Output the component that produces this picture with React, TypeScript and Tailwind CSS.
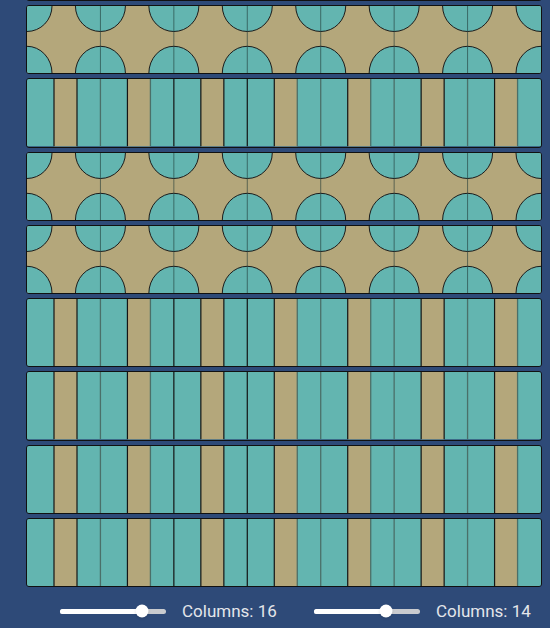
import React from "react";

const TEAL = "#63b5b0";
const TAN = "#b4a77b";
const W = 514;
const H = 67.3;
const TILES = 7;
const TW = W / TILES;

// line style for each stripe edge, left to right (B = black, S = soft)
const stripeEdges = "BBSBSBBBBBSSBSSBBSBS".split("");

const CircleRow: React.FC = () => {
  const corners = Array.from({ length: TILES + 1 }, (_, k) => k * TW);
  return (
    <svg className="w-full h-full block" viewBox={`0 0 ${W} ${H}`} preserveAspectRatio="none">
      <rect x={0} y={0} width={W} height={H} fill={TAN} />
      {corners.map((x) => (
        <g key={x}>
          <ellipse cx={x} cy={0} rx={25} ry={25.5} fill={TEAL} stroke="#1b1b1b" strokeWidth={1} />
          <ellipse cx={x} cy={H} rx={25} ry={27} fill={TEAL} stroke="#1b1b1b" strokeWidth={1} />
        </g>
      ))}
      {corners.slice(1, -1).map((x) => (
        <line key={x} x1={x} y1={0} x2={x} y2={H} stroke="#1e3534" strokeOpacity={0.6} strokeWidth={1} />
      ))}
    </svg>
  );
};

const StripeRow: React.FC = () => {
  const edges: number[] = [];
  for (let i = 0; i < TILES; i++) {
    const x0 = i * TW;
    edges.push(x0 + 27, x0 + 50);
    if (i < TILES - 1) edges.push(x0 + TW);
  }
  return (
    <svg className="w-full h-full block" viewBox={`0 0 ${W} ${H}`} preserveAspectRatio="none">
      <rect x={0} y={0} width={W} height={H} fill={TEAL} />
      {Array.from({ length: TILES }, (_, i) => (
        <rect key={i} x={i * TW + 27} y={0} width={23} height={H} fill={TAN} />
      ))}
      {edges.map((x, i) => (
        <line
          key={i}
          x1={x}
          y1={0}
          x2={x}
          y2={H}
          stroke={stripeEdges[i] === "B" ? "#141414" : "#4a6f69"}
          strokeWidth={stripeEdges[i] === "B" ? 1.2 : 1.3}
        />
      ))}
    </svg>
  );
};

const Slider: React.FC<{ value: number; label: string }> = ({ value, label }) => (
  <div className="w-[254px] shrink-0 flex items-center gap-4 h-5">
    <div className="relative w-[106px] h-[5px] rounded-full bg-[#c9cbcf]">
      <div className="absolute left-0 top-0 h-full rounded-full bg-white" style={{ width: `${value}%` }} />
      <div
        className="absolute top-1/2 w-[13px] h-[13px] -translate-x-1/2 -translate-y-1/2 rounded-full bg-white shadow-sm"
        style={{ left: `${value}%` }}
      />
    </div>
    <span className="text-[#e4e6ea] text-[17px] font-['Roboto',sans-serif] leading-none">{label}</span>
  </div>
);

export default function App() {
  const rows = ["c", "c", "s", "c", "c", "s", "s", "s", "s"];
  return (
    <div className="w-[550px] h-[628px] overflow-hidden bg-[#2e4a78]">
      <div className="-mt-[68.3px] ml-[26px] w-[516px] flex flex-col gap-[4px]">
        {rows.map((r, i) => (
          <div key={i} className="h-[69.3px] border border-[#111] rounded-[3px] overflow-hidden">
            {r === "c" ? <CircleRow /> : <StripeRow />}
          </div>
        ))}
      </div>
      <div className="mt-[14px] pl-[60px] flex">
        <Slider value={77} label="Columns: 16" />
        <Slider value={68} label="Columns: 14" />
      </div>
    </div>
  );
}
